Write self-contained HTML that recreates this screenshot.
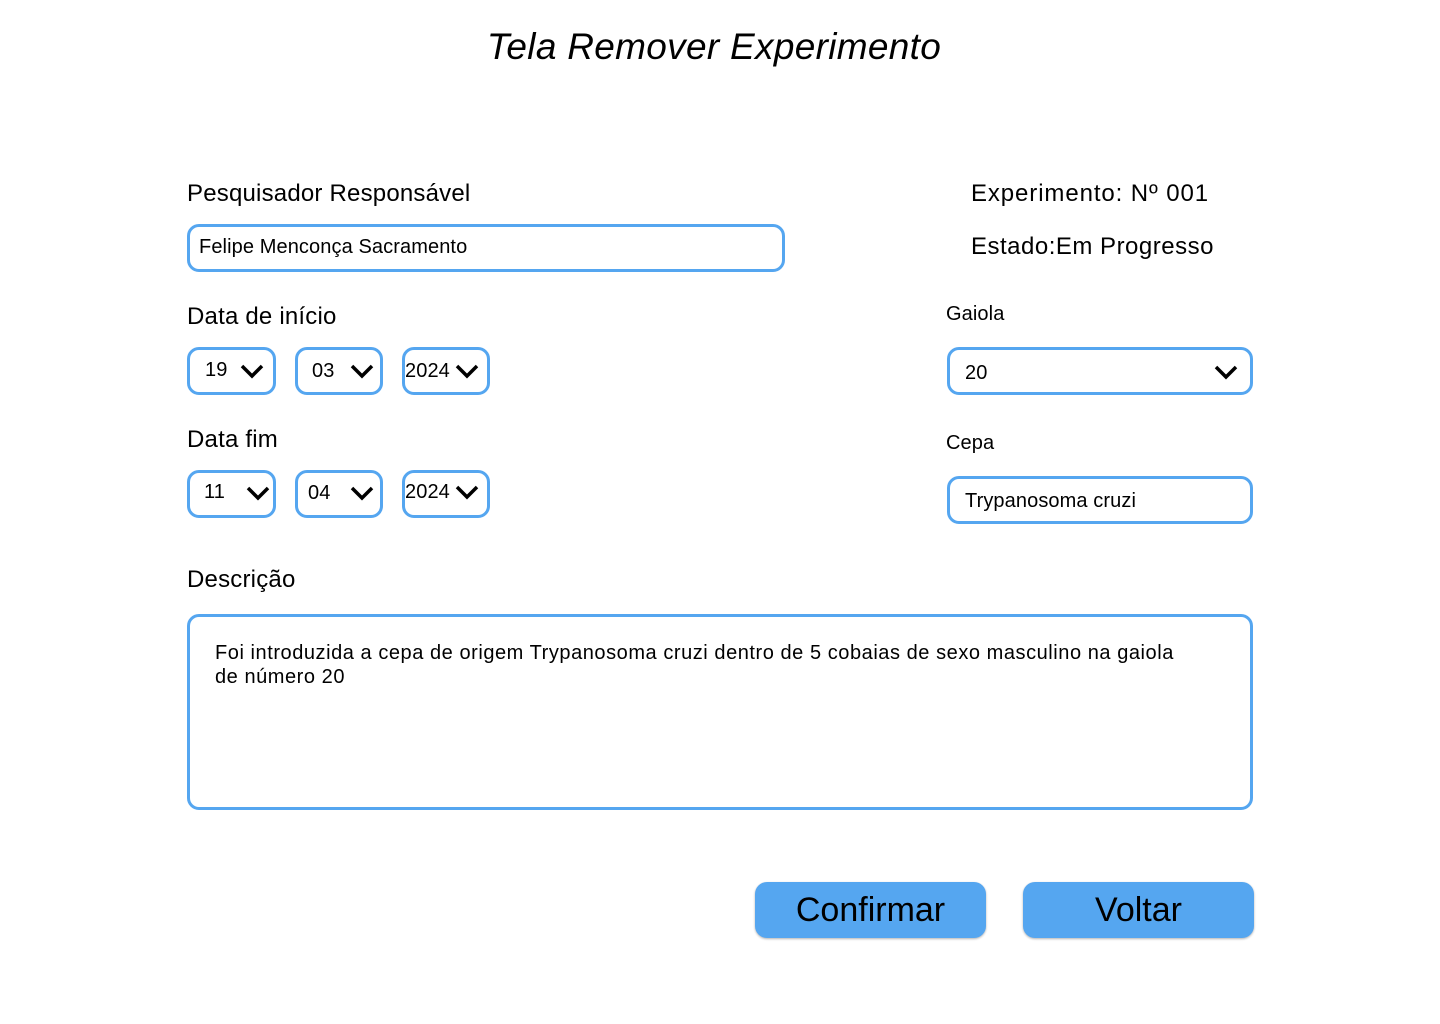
<!DOCTYPE html>
<html><head><meta charset="utf-8"><style>
body{margin:0;width:1440px;height:1024px;background:#fff;position:relative;font-family:"Liberation Sans",sans-serif;color:#000;overflow:hidden}
.a{position:absolute;white-space:nowrap}
.b{position:absolute;border:3px solid #55A6F0;border-radius:12px;box-sizing:border-box;background:#fff}
.l{font-size:24px;letter-spacing:0.2px}
.s{font-size:20px;letter-spacing:0.1px}
svg.c{position:absolute}
.btn{position:absolute;background:#55A6F0;border-radius:12px;box-shadow:0 1px 2px rgba(0,0,0,.3);font-size:34px;text-align:center;line-height:56px;height:56px;width:231px}
</style></head><body>
<div class="a" style="left:0;width:1428px;text-align:center;top:26px;font-size:37px;font-style:italic;letter-spacing:0.3px">Tela Remover Experimento</div>

<div class="a l" style="left:187px;top:180px">Pesquisador Responsável</div>
<div class="b" style="left:187px;top:224px;width:598px;height:48px"></div>
<div class="a s" style="left:199px;top:236px">Felipe Menconça Sacramento</div>

<div class="a l" style="left:971px;top:180px;letter-spacing:0.9px">Experimento: Nº 001</div>
<div class="a l" style="left:971px;top:233px;letter-spacing:0.5px">Estado:Em Progresso</div>

<div class="a l" style="left:187px;top:303px">Data de início</div>
<div class="b" style="left:187px;top:347px;width:89px;height:48px"></div>
<div class="b" style="left:295px;top:347px;width:88px;height:48px"></div>
<div class="b" style="left:402px;top:347px;width:88px;height:48px"></div>
<div class="a s" style="left:205px;top:359px">19</div>
<div class="a s" style="left:312px;top:360px">03</div>
<div class="a s" style="left:405px;top:360px">2024</div>

<div class="a l" style="left:187px;top:426px">Data fim</div>
<div class="b" style="left:187px;top:470px;width:89px;height:48px"></div>
<div class="b" style="left:295px;top:470px;width:88px;height:48px"></div>
<div class="b" style="left:402px;top:470px;width:88px;height:48px"></div>
<div class="a s" style="left:204px;top:481px">11</div>
<div class="a s" style="left:308px;top:482px">04</div>
<div class="a s" style="left:405px;top:481px">2024</div>

<svg class="c" style="left:240px;top:363px" width="24" height="16"><path d="M2 3 L12 13 L22 3" fill="none" stroke="#000" stroke-width="3.5"/></svg>
<svg class="c" style="left:350px;top:363px" width="24" height="16"><path d="M2 3 L12 13 L22 3" fill="none" stroke="#000" stroke-width="3.5"/></svg>
<svg class="c" style="left:455px;top:363px" width="24" height="16"><path d="M2 3 L12 13 L22 3" fill="none" stroke="#000" stroke-width="3.5"/></svg>
<svg class="c" style="left:246px;top:485px" width="24" height="16"><path d="M2 3 L12 13 L22 3" fill="none" stroke="#000" stroke-width="3.5"/></svg>
<svg class="c" style="left:350px;top:485px" width="24" height="16"><path d="M2 3 L12 13 L22 3" fill="none" stroke="#000" stroke-width="3.5"/></svg>
<svg class="c" style="left:455px;top:484px" width="24" height="16"><path d="M2 3 L12 13 L22 3" fill="none" stroke="#000" stroke-width="3.5"/></svg>

<div class="a s" style="left:946px;top:303px">Gaiola</div>
<div class="b" style="left:947px;top:347px;width:306px;height:48px"></div>
<div class="a s" style="left:965px;top:362px">20</div>
<svg class="c" style="left:1214px;top:364px" width="24" height="16"><path d="M2 3 L12 13 L22 3" fill="none" stroke="#000" stroke-width="3.5"/></svg>

<div class="a s" style="left:946px;top:432px">Cepa</div>
<div class="b" style="left:947px;top:476px;width:306px;height:48px"></div>
<div class="a s" style="left:965px;top:490px">Trypanosoma cruzi</div>

<div class="a l" style="left:187px;top:566px">Descrição</div>
<div class="b" style="left:187px;top:614px;width:1066px;height:196px"></div>
<div class="a" style="left:215px;top:641px;line-height:24px;font-size:20px;letter-spacing:0.55px">Foi introduzida a cepa de origem Trypanosoma cruzi dentro de 5 cobaias de sexo masculino na gaiola<br>de número 20</div>

<div class="btn" style="left:755px;top:882px">Confirmar</div>
<div class="btn" style="left:1023px;top:882px">Voltar</div>
</body></html>
